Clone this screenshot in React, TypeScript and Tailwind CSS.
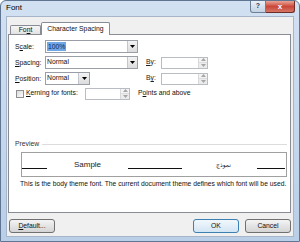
import { ReactNode } from 'react';

const font = { fontFamily: '"Liberation Sans", Arial, sans-serif' };

const Arrow = ({ up, color = '#000' }: { up?: boolean; color?: string }) => (
  <svg width="5" height="3" viewBox="0 0 5 3">
    <polygon points={up ? '0,3 5,3 2.5,0' : '0,0 5,0 2.5,3'} fill={color} />
  </svg>
);

const Combo = ({ w, children, btn = 'w-[10px]' }: { w: string; children?: ReactNode; btn?: string }) => (
  <div className={`${w} h-[13px] flex items-stretch bg-white border border-[#9a9ea6]`}>
    <div className="flex-1 flex items-center pl-[1px] overflow-hidden">{children}</div>
    <div className={`${btn} flex items-center justify-center border-l border-[#c3c6cc] bg-linear-to-b from-[#f4f4f4] to-[#dcdcdc]`}>
      <Arrow />
    </div>
  </div>
);

const Spinner = ({ w }: { w: string }) => (
  <div className={`${w} h-[12px] flex items-stretch bg-white border border-[#b9bcc2]`}>
    <div className="flex-1" />
    <div className="w-[9px] flex flex-col border-l border-[#d6d8dc]">
      <div className="flex-1 flex items-center justify-center bg-[#f4f4f4] border-b border-[#dcdde0]">
        <Arrow up color="#a6a6a6" />
      </div>
      <div className="flex-1 flex items-center justify-center bg-[#ececec]">
        <Arrow color="#a6a6a6" />
      </div>
    </div>
  </div>
);

const Label = ({ children }: { children: ReactNode }) => (
  <div className="w-[30px] text-[6.8px] leading-[13px] text-[#111]">{children}</div>
);

const Btn = ({ children, def }: { children: ReactNode; def?: boolean }) => (
  <div
    className={`w-[46px] h-[14px] rounded-[3px] flex items-center justify-center text-[6.8px] text-[#111] border ${
      def
        ? 'border-[#3c7fb1] bg-linear-to-b from-[#f2f8fd] to-[#d3e5f3]'
        : 'border-[#707070] bg-linear-to-b from-[#f4f4f4] to-[#d4d4d4]'
    }`}
  >
    {children}
  </div>
);

export default function App() {
  return (
    <div
      style={font}
      className="w-[300px] h-[242px] flex flex-col border border-[#5f7592] rounded-t-[6px] overflow-hidden bg-linear-to-b from-[#d2e1f2] to-[#b9cfe8]"
    >
      {/* title bar */}
      <div className="h-[15px] flex items-start justify-between">
        <div className="pl-[5px] pt-[2px] text-[8px] leading-[10px] text-[#000]">Font</div>
        <div className="flex mr-[4px]">
          <div className="w-[16px] h-[12px] flex items-center justify-center border border-t-0 border-[#6d7f96] rounded-bl-[3px] bg-linear-to-b from-[#eaf0f8] to-[#c3d2e4] text-[7px] font-bold text-[#2a3e55]">
            ?
          </div>
          <div className="w-[29px] h-[12px] flex items-center justify-center border border-t-0 border-l-0 border-[#6b2d25] rounded-br-[3px] bg-linear-to-b from-[#e9a497] via-[#c8473a] to-[#d67564] text-[8px] font-bold text-white leading-none">
            x
          </div>
        </div>
      </div>

      {/* client area */}
      <div className="mx-[5px] h-[221px] bg-[#f0f0f0] border border-[#a6b6c8] flex flex-col">
        {/* tabs */}
        <div className="h-[12px] mt-[5px] ml-[3px] flex items-end">
          <div className="w-[31px] h-[9px] border border-b-0 border-[#898c95] rounded-t-[2px] bg-linear-to-b from-[#f6f6f6] to-[#e2e2e2] flex items-center justify-center text-[6.8px] text-[#111]">
            Fo<u>n</u>t
          </div>
          <div className="relative z-10 mb-[-1px] w-[69px] h-[13px] border border-b-0 border-[#898c95] rounded-t-[2px] bg-white flex items-center justify-center text-[6.8px] text-[#111]">
            Character Spacing
          </div>
        </div>

        {/* panel */}
        <div className="ml-[1px] w-[283px] h-[179px] bg-white border border-[#898c95] flex flex-col pt-[5px] pl-[6px]">
          <div className="flex flex-col gap-[3px]">
            <div className="flex items-center h-[13px]">
              <Label>
                S<u>c</u>ale:
              </Label>
              <Combo w="w-[93px]">
                <span className="text-[6.8px] leading-[9px] px-[1px] bg-[#6fa6e6] text-[#0b2a5c]">100%</span>
              </Combo>
            </div>
            <div className="flex items-center h-[13px]">
              <Label>
                <u>S</u>pacing:
              </Label>
              <div className="w-[101px]">
                <Combo w="w-[93px]">
                  <span className="text-[6.8px] text-[#111]">Normal</span>
                </Combo>
              </div>
              <div className="w-[15px] text-[6.8px] text-[#222]">
                <u>B</u>y:
              </div>
              <Spinner w="w-[47px]" />
            </div>
            <div className="flex items-center h-[13px]">
              <Label>
                <u>P</u>osition:
              </Label>
              <div className="w-[101px]">
                <Combo w="w-[45px]" btn="w-[11px]">
                  <span className="text-[6.8px] text-[#111]">Normal</span>
                </Combo>
              </div>
              <div className="w-[15px] text-[6.8px] text-[#222]">
                B<u>y</u>:
              </div>
              <Spinner w="w-[47px]" />
            </div>
            <div className="flex items-center h-[11px]">
              <div className="w-[70px] flex items-center">
                <div className="ml-[1px] w-[8px] h-[8px] border border-[#8f8f8f] bg-linear-to-br from-[#dcdcdc] to-[#fbfbfb]" />
                <span className="ml-[2px] text-[6.8px] text-[#111]">
                  <u>K</u>erning for fonts:
                </span>
              </div>
              <Spinner w="w-[45px]" />
              <span className="ml-[8px] text-[6.8px] text-[#111]">
                P<u>o</u>ints and above
              </span>
            </div>
          </div>

          {/* preview */}
          <div className="mt-[40px] h-[10px] flex items-center">
            <span className="text-[6.8px] text-[#333]">Preview</span>
            <div className="flex-1 h-px bg-[#dcdcdc] ml-[3px] mr-[3px]" />
          </div>
          <div className="mt-[3px] ml-[6px] w-[266px] h-[25px] border border-[#a0a0a0] flex items-center">
            <div className="self-end mb-[7px] w-[25px] h-px bg-[#111]" />
            <div className="w-[81px] text-center text-[8px] text-[#222]">Sample</div>
            <div className="self-end mb-[7px] w-[54px] h-px bg-[#111]" />
            <div
              className="w-[75px] pl-[8px] text-center text-[6px] text-[#111]"
              style={{ fontFamily: '"DejaVu Sans", "Noto Sans", sans-serif' }}
            >
              نموذج
            </div>
            <div className="self-end mb-[7px] w-[28px] h-px bg-[#111]" />
          </div>
          <div className="mt-[2px] ml-[5px] text-[6.75px] leading-[9px] text-[#111] whitespace-nowrap">
            This is the body theme font. The current document theme defines which font will be used.
          </div>
        </div>

        {/* buttons */}
        <div className="mt-[6px] px-[2px] flex justify-between">
          <Btn>
            <u>D</u>efault...
          </Btn>
          <div className="flex gap-[6px]">
            <Btn def>OK</Btn>
            <Btn>Cancel</Btn>
          </div>
        </div>
      </div>
    </div>
  );
}
